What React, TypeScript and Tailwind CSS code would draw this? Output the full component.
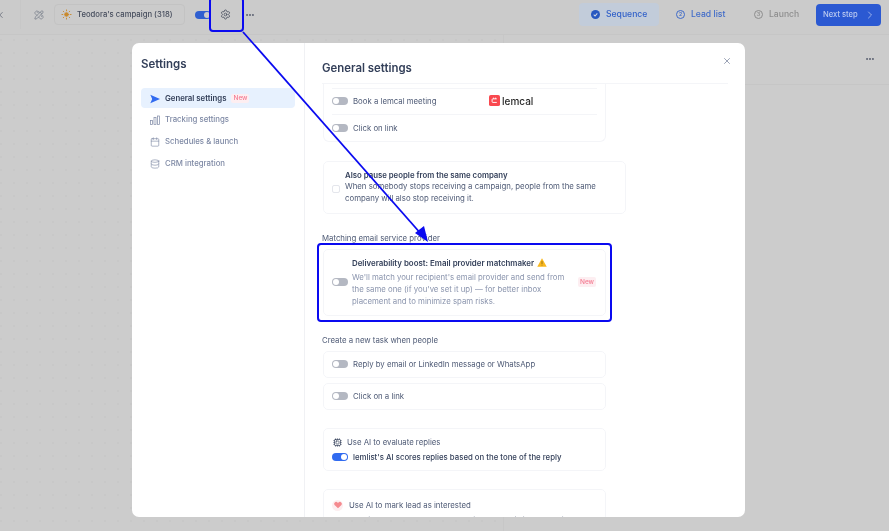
import { Calendar, ChevronLeft, ChevronRight, Cpu, Database, Ellipsis, PencilRuler, Settings, Sun, X } from "lucide-react";

function Toggle({ on = false }: { on?: boolean }) {
  return (
    <span className={`flex h-[8px] w-[16px] shrink-0 items-center rounded-full px-[1px] ${on ? "justify-end bg-[#316bf0]" : "bg-[#b4b8c2]"}`}>
      <span className="h-[6px] w-[6px] rounded-full bg-white" />
    </span>
  );
}

function StepCircle({ n, color }: { n: number; color: string }) {
  return (
    <span className={`flex h-[9px] w-[9px] items-center justify-center rounded-full border text-[5px] leading-none font-semibold ${color}`}>{n}</span>
  );
}

function TopBar() {
  return (
    <div className="flex h-[35px] shrink-0 items-center border-b border-[#c6c6c6] bg-[#cbcbcb] pb-[5px]">
      <div className="flex h-full w-[21px] items-center border-r border-[#c7c7c7]">
        <ChevronLeft className="-ml-[4px] h-[10px] w-[10px] text-[#666c7a]" />
      </div>
      <PencilRuler className="ml-[13px] h-[10px] w-[10px] text-[#69707f]" strokeWidth={1.5} />
      <div className="ml-[10px] flex h-[21px] w-[131px] items-center gap-[5px] rounded-[4px] border border-[#c3c3c3] pl-[6px] text-[#454c5c]">
        <Sun className="h-[11px] w-[11px] fill-[#c98a2e] text-[#c98a2e]" />
        <span className="text-[7.7px] font-medium">Teodora's campaign (318)</span>
      </div>
      <div className="ml-[10px] flex h-[8px] w-[16px] items-center justify-end rounded-full bg-[#2f5fd0] px-[1px]">
        <span className="h-[6px] w-[6px] rounded-full bg-[#cccccc]" />
      </div>
      <Settings className="ml-[9px] h-[11px] w-[11px] text-[#4a5060]" strokeWidth={1.75} />
      <Ellipsis className="ml-[14px] h-[10px] w-[10px] text-[#5a6070]" strokeWidth={3} />
      <div className="ml-auto flex items-center pr-[8px] text-[8.6px] font-medium">
        <div className="flex h-[23px] w-[80px] items-center gap-[6px] rounded-[4px] bg-[#c2ccda] pl-[12px] text-[#2f5fc8]">
          <svg viewBox="0 0 10 10" className="h-[9px] w-[9px]">
            <circle cx="5" cy="5" r="5" fill="#2858c0" />
            <path d="M3 5.2l1.5 1.5L7 3.8" fill="none" stroke="#cdd5e2" strokeWidth="1.2" />
          </svg>
          Sequence
        </div>
        <div className="ml-[17px] flex w-[50px] items-center gap-[6px] whitespace-nowrap text-[#3f6bc9]">
          <StepCircle n={2} color="border-[#3f6bc9]" />
          Lead list
        </div>
        <div className="ml-[28px] flex w-[46px] items-center gap-[6px] text-[#8e8e8e]">
          <StepCircle n={3} color="border-[#8e8e8e]" />
          Launch
        </div>
        <div className="ml-[16px] flex h-[22px] w-[65px] items-center gap-[6px] rounded-[4px] bg-[#2b59d2] pl-[7px] text-[7.6px] whitespace-nowrap text-[#bccbf0]">
          Next step
          <ChevronRight className="h-[12px] w-[12px]" strokeWidth={1.5} />
        </div>
      </div>
    </div>
  );
}

function NavItem({ icon, label }: { icon: React.ReactNode; label: string }) {
  return (
    <div className="flex h-[22px] items-center px-[9px] text-[7.8px] font-medium text-[#7d88a4]">
      <span className="flex w-[15px] shrink-0 items-center">{icon}</span>
      {label}
    </div>
  );
}

function Sidebar() {
  return (
    <div className="flex w-[173px] shrink-0 flex-col border-r border-[#f0f1f4] px-[9px] pt-[14px]">
      <h2 className="text-[11.5px] leading-[15px] font-semibold text-[#34405a]">Settings</h2>
      <div className="mt-[16px] flex h-[20px] w-[154px] items-center rounded-[4px] bg-[#e7f1fe] px-[9px] pt-[1px] text-[7.8px] font-semibold text-[#34405a]">
        <svg viewBox="0 0 10 10" className="mr-[5px] h-[10px] w-[10px] shrink-0">
          <path d="M0.3 0.8L10 5L0.3 9.2L2.2 5Z" fill="#316bf0" />
        </svg>
        General settings
        <span className="ml-[5px] rounded-[2px] bg-[#fdeef1] px-[2px] text-[6.5px] font-medium text-[#f47a90]">New</span>
      </div>
      <div className="pt-[1px]">
        <NavItem
          label="Tracking settings"
          icon={
            <svg viewBox="0 0 10 10" className="h-[10px] w-[10px]" fill="none" stroke="#7d88a4" strokeWidth="0.7">
              <rect x="0.5" y="5.5" width="2" height="4" />
              <rect x="4" y="2.5" width="2" height="7" />
              <rect x="7.5" y="1" width="2" height="8.5" />
            </svg>
          }
        />
        <NavItem label="Schedules & launch" icon={<Calendar className="h-[10px] w-[10px] text-[#7d88a4]" strokeWidth={1.5} />} />
        <NavItem label="CRM integration" icon={<Database className="h-[10px] w-[10px] text-[#7d88a4]" strokeWidth={1.5} />} />
      </div>
    </div>
  );
}

function ToggleCard({ label }: { label: string }) {
  return (
    <div className="flex h-[27px] w-[283px] items-center gap-[5px] rounded-[5px] border border-[#f4f5f8] pb-[2px] pl-[8px] text-[#4e5a75]">
      <Toggle />
      {label}
    </div>
  );
}

function Content() {
  return (
    <div className="flex min-w-0 flex-1 flex-col pl-[17px] pr-[17px]">
      <div className="flex h-[41px] shrink-0 items-start justify-between border-b border-[#f4f5f8] pt-[18px]">
        <h2 className="text-[11.4px] leading-[14px] font-semibold text-[#34405a]">General settings</h2>
        <X className="-mr-[4px] -mt-[5px] h-[10px] w-[10px] text-[#5f6c8a]" strokeWidth={1.5} />
      </div>
      <div className="min-h-0 flex-1 overflow-hidden pl-[1px] text-[7.8px] leading-[12px]">
        <div className="h-[58px] w-[283px] rounded-b-[6px] border-x border-b border-[#f4f5f8] px-[8px] pt-[4px]">
          <div className="flex h-[27px] items-center gap-[5px] border-y border-[#f4f5f8] pb-[2px] text-[#4e5a75]">
            <Toggle />
            <span className="w-[131px]">Book a lemcal meeting</span>
            <svg viewBox="0 0 12 12" className="h-[11px] w-[11px]">
              <rect width="12" height="12" rx="2" fill="#f9484f" />
              <path d="M8.5 4.2H4.2a.8.8 0 0 0-.8.8v2.3a.8.8 0 0 0 .8.8h4.3" fill="none" stroke="#fff" strokeWidth="1" />
              <path d="M5 2.8v1.6M7.2 2.8v1.6" stroke="#fff" strokeWidth="0.8" />
            </svg>
            <span className="-ml-[3px] text-[10px] font-medium text-[#2a2a2a]">lemcal</span>
          </div>
          <div className="flex h-[27px] items-center gap-[5px] pb-[2px] text-[#4e5a75]">
            <Toggle />
            Click on link
          </div>
        </div>

        <div className="mt-[19px] flex h-[53px] w-[303px] items-center rounded-[5px] border border-[#f4f5f8] pb-[2px] pl-[8px]">
          <span className="mt-[4px] h-[8px] w-[8px] shrink-0 rounded-[2px] border border-[#e4e6ec]" />
          <div className="ml-[5px] pr-[8px] text-[#4e5a75]">
            <div className="font-semibold text-[#34405a]">Also pause people from the same company</div>
            <div className="leading-[11.5px]">When somebody stops receiving a campaign, people from the same company will also stop receiving it.</div>
          </div>
        </div>

        <div className="-ml-[1px] mt-[18px] text-[#4e5a75]">Matching email service provider</div>
        <div className="mt-[5px] flex h-[67px] w-[283px] items-center rounded-[5px] border border-[#f4f5f8] pb-[2px] pl-[8px] pr-[9px]">
          <Toggle />
          <div className="ml-[4px] flex-1">
            <div className="flex items-center gap-[3px] text-[7.9px] font-semibold text-[#34405a]">
              Deliverability boost: Email provider matchmaker
              <svg viewBox="0 0 12 11" className="h-[9px] w-[10px]">
                <path d="M6 0.3L11.8 10.7H0.2Z" fill="#f9b81e" />
                <path d="M6 3.8v3.5M6 8.2v1" stroke="#7a5a10" strokeWidth="0.9" />
              </svg>
            </div>
            <div className="mt-[2px] w-[220px] text-[#8a94ad]">We'll match your recipient's email provider and send from the same one (if you've set it up) — for better inbox placement and to minimize spam risks.</div>
          </div>
          <span className="rounded-[2px] bg-[#fdeef1] px-[2px] text-[6.5px] leading-[10px] font-medium text-[#f47a90]">New</span>
        </div>

        <div className="-ml-[1px] mt-[18px] text-[#4e5a75]">Create a new task when people</div>
        <div className="mt-[5px] flex flex-col gap-[5px]">
          <ToggleCard label="Reply by email or LinkedIn message or WhatsApp" />
          <ToggleCard label="Click on a link" />
        </div>

        <div className="mt-[18px] flex h-[43px] w-[283px] flex-col justify-center gap-[3px] rounded-[5px] border border-[#f4f5f8] pl-[8px] text-[#4e5a75]">
          <div className="flex items-center gap-[5px]">
            <Cpu className="ml-[1px] h-[9px] w-[9px] text-[#34405a]" strokeWidth={1.75} />
            Use AI to evaluate replies
          </div>
          <div className="flex items-center gap-[5px] font-medium text-[#34405a]">
            <Toggle on />
            lemlist's AI scores replies based on the tone of the reply
          </div>
        </div>

        <div className="mt-[18px] w-[283px] rounded-[5px] border border-[#f4f5f8] pl-[8px] pt-[9px] text-[#4e5a75]">
          <div className="flex items-center gap-[6px]">
            <span className="flex h-[11px] w-[11px] items-center justify-center rounded-full bg-[#fdeef0]">
              <svg viewBox="0 0 10 10" className="h-[8px] w-[8px]">
                <path d="M5 9.2L1 5.2a2.4 2.4 0 0 1 3.4-3.4l.6.6.6-.6A2.4 2.4 0 0 1 9 5.2Z" fill="#f58a8f" />
              </svg>
            </span>
            Use AI to mark lead as interested
          </div>
          <div className="mt-[3px] flex items-center gap-[5px]">
            <Toggle />
            lemlist's AI detects that the replying person is interested in your offer
          </div>
        </div>
      </div>
    </div>
  );
}

export default function App() {
  return (
    <div className="relative flex h-[531px] w-[889px] flex-col overflow-hidden bg-[#cccccc] font-['Inter',sans-serif] [filter:blur(0.4px)]">
      <TopBar />
      <div className="flex min-h-0 flex-1">
        <div className="w-[503px] bg-[radial-gradient(#bcbcbc_0.6px,transparent_0.8px)] bg-[size:13px_13px] bg-[position:-5.5px_-1.5px]" />
        <div className="flex-1 border-l border-[#c7c7c7]">
          <div className="flex h-[50px] items-center justify-end border-b border-[#c6c6c6] pr-[14px]">
            <Ellipsis className="-mt-[2px] h-[10px] w-[10px] text-[#5a6070]" strokeWidth={3} />
          </div>
        </div>
      </div>

      {/* modal */}
      <div className="absolute left-[132px] top-[43px] flex h-[474px] w-[613px] overflow-hidden rounded-[7px] bg-white">
        <Sidebar />
        <Content />
      </div>

      {/* annotation */}
      <div className="absolute left-[209px] top-[-3px] h-[35px] w-[35px] rounded-[4px] border-2 border-[#0a0af0]" />
      <div className="absolute left-[317px] top-[243px] h-[79px] w-[295px] rounded-[4px] border-2 border-[#0a0af0]" />
      <svg className="pointer-events-none absolute inset-0 h-full w-full" viewBox="0 0 889 531">
        <path d="M243 32L422 235" stroke="#0a0af0" strokeWidth="1.8" />
        <path d="M428 242L415 233L424 226Z" fill="#0a0af0" />
      </svg>
    </div>
  );
}
